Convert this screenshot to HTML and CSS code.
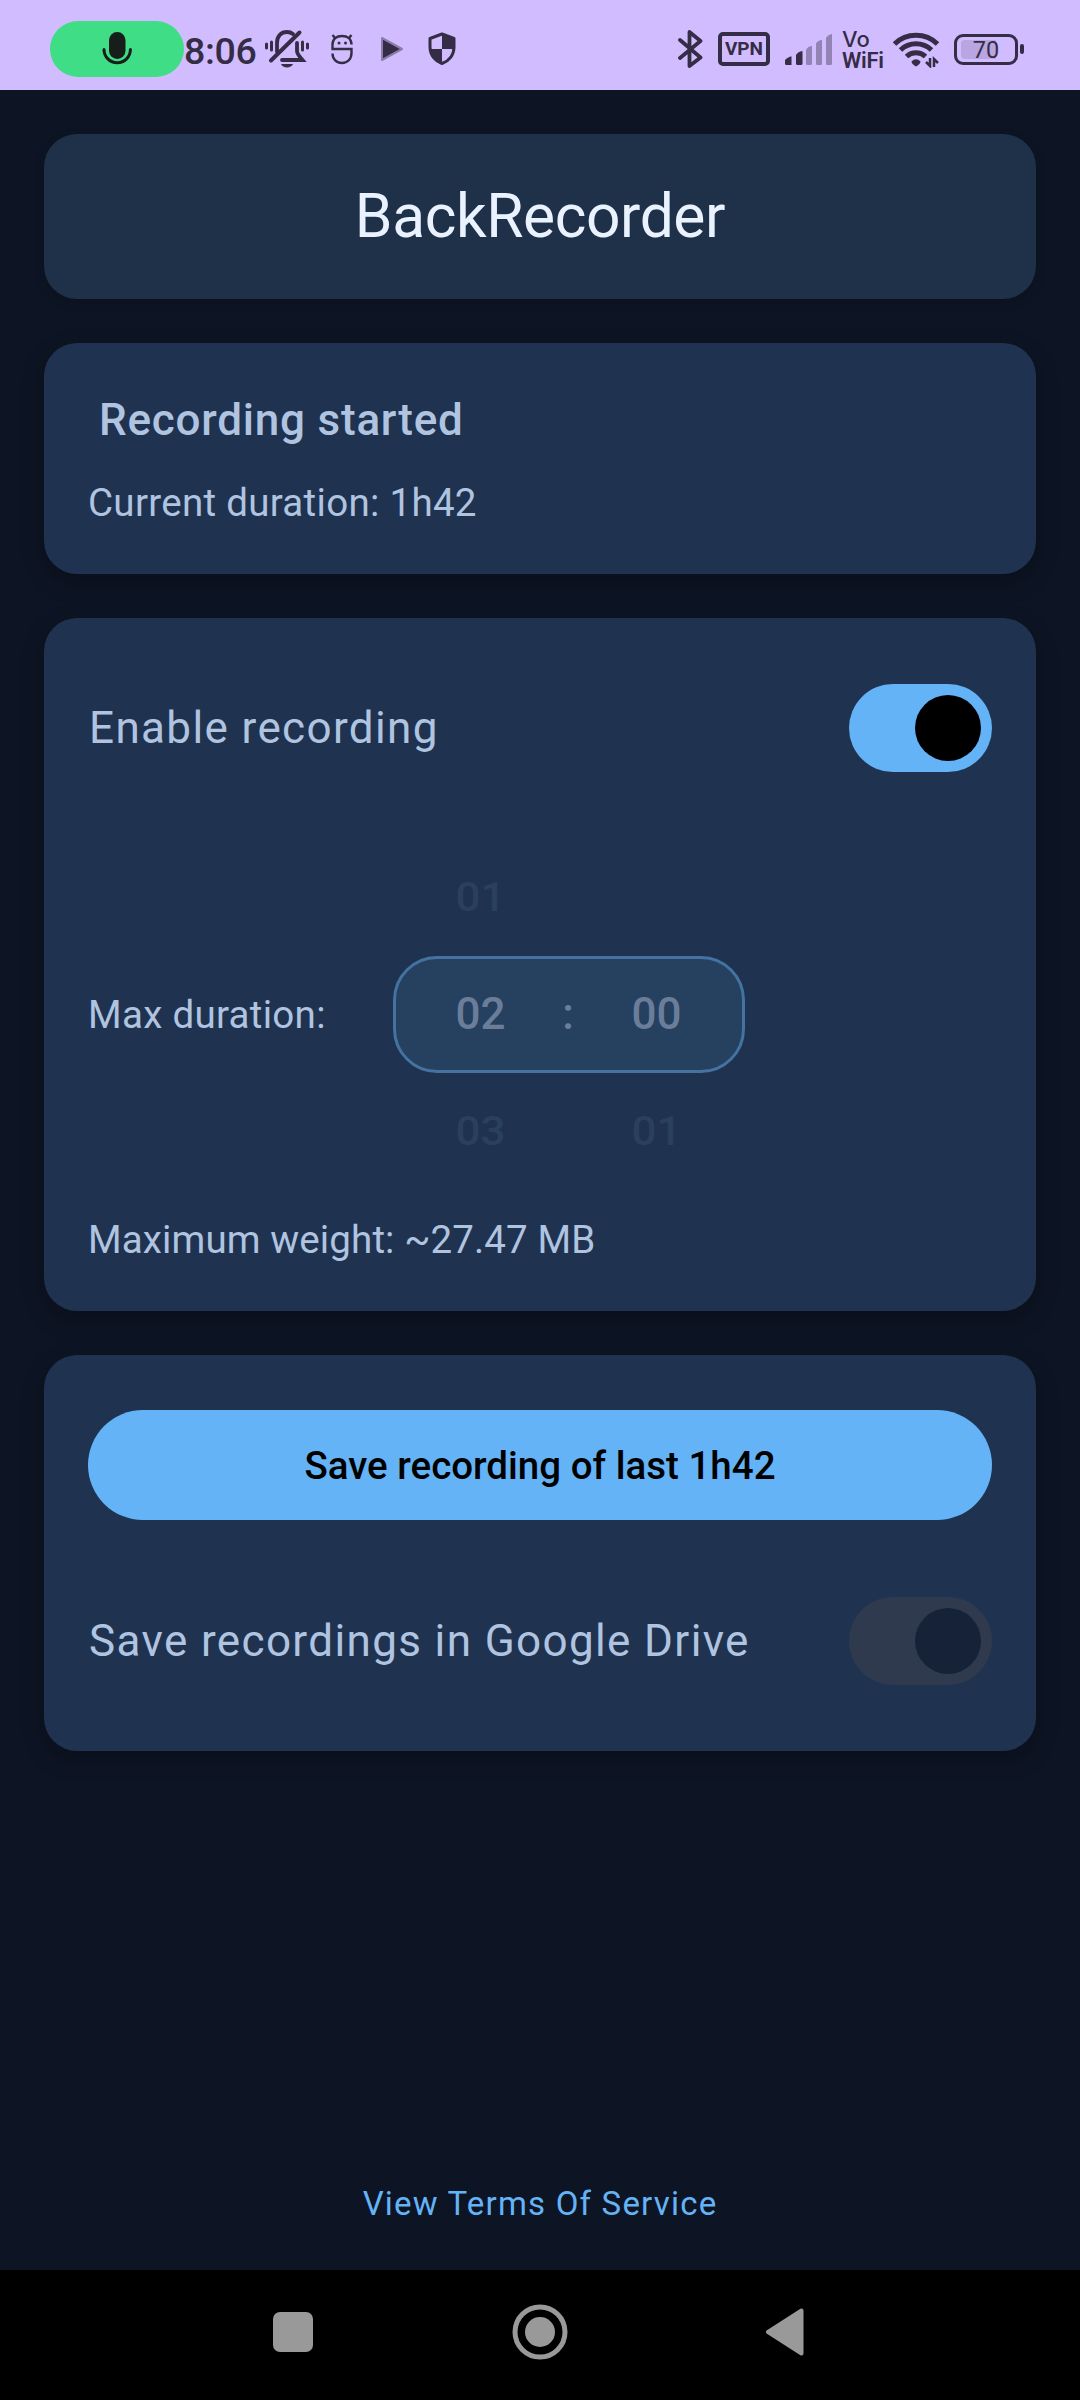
FILE: index.html
```html
<!DOCTYPE html>
<html lang="en">
<head>
<meta charset="utf-8">
<title>BackRecorder</title>
<link rel="stylesheet" href="styles.css">
</head>
<body>
<header class="status">
  <div class="mic-pill">
    <svg width="30" height="36" viewBox="0 0 30 36"><rect x="7" y="1" width="16.500" height="27" rx="8.250" fill="#171d1a"/><path d="M2 18.500a13.200 13.200 0 0 0 26.400 0" fill="none" stroke="#171d1a" stroke-width="3" stroke-linecap="round"/></svg>
  </div>
  <span class="clock">8:06</span>
  <svg class="bell" width="44" height="40" viewBox="0 0 44 40" fill="none" stroke="#352d45" stroke-linecap="round">
    <path d="M1.500 15v4M6.500 13v8M37.500 13v8M42.500 15v4" stroke-width="3"/>
    <path d="M12 22.500V14C12 7 16 3 22 3c2.500 0 4.500.8 6 2M32 14v8c0 3 2 5 5.500 9H17" stroke-width="3.800"/>
    <path d="M6 31.500 34.500 3.500" stroke-width="4"/>
    <path d="M16 35h12c-1.500 4.500-10.500 4.500-12 0z" fill="#352d45" stroke="none"/>
  </svg>
  <svg class="droid" width="24" height="32" viewBox="0 0 24 32" fill="none" stroke="#352d45" stroke-width="2.400">
    <path d="M21.500 11.500C21.500 6 17.500 3 12 3S2.500 6 2.500 11.500V16H21.500V20c0 6-4 10-9.500 10S2.500 26 2.500 20.500"/>
    <path d="M2.500 2l3 3.500M21.500 2l-3 3.500"/>
    <circle cx="9" cy="10" r="1.500" fill="#352d45" stroke="none"/><circle cx="15.500" cy="10" r="1.500" fill="#352d45" stroke="none"/>
  </svg>
  <svg class="play" width="24" height="26" viewBox="0 0 24 26"><path d="M2 2v22L22 13z" fill="#352d45" stroke="#8b7ca9" stroke-width="2" stroke-linejoin="round"/></svg>
  <svg class="shield" width="30" height="34" viewBox="0 0 30 34"><path d="M15 2 27 6.500V15c0 8-5 14-12 16.500C8 29 3 23 3 15V6.500z" fill="none" stroke="#352d45" stroke-width="3" stroke-linejoin="round"/><path d="M15 2l12 4.500V17H15zM15 17v14.500C8 29 3.500 24 3 17z" fill="#352d45"/></svg>
  <div class="status-right">
    <svg class="bt" width="26" height="38" viewBox="0 0 26 38" fill="none" stroke="#352d45" stroke-width="3.800" stroke-linecap="round" stroke-linejoin="round"><path d="M2 10 22.500 27.500 11.500 36V2L22.500 11 2 28"/></svg>
    <span class="vpn">VPN</span>
    <svg class="signal" width="49" height="32" viewBox="0 0 49 32"><path d="M1 26.500c0-1.500 5-4.500 6.500-4V31H2.500q-1.500 0-1.500-1.500zM12 21q2-3.500 6.500-4v12.500q0 1.500-1.500 1.500h-3.500q-1.500 0-1.500-1.500z" fill="#352d45"/><path d="M22 16q2-4 6-4v17.500q0 1.500-1.500 1.500h-3q-1.500 0-1.500-1.500zM32 9.500q2-3.500 6-3.500v23.500q0 1.500-1.500 1.500h-3q-1.500 0-1.500-1.500zM42 4q2-3.500 6-4v29.500q0 1.500-1.500 1.500h-3q-1.500 0-1.500-1.500z" fill="#9383b5"/></svg>
    <span class="vowifi"><span class="vo">Vo</span><span>WiFi</span></span>
    <svg class="wifi" width="47" height="36" viewBox="0 0 47 36"><g fill="none" stroke="#352d45" stroke-width="5"><path d="M1.500 12a31 31 0 0 1 43 0M7.500 18a22.500 22.500 0 0 1 31 0M13.500 24.500a14 14 0 0 1 19 0"/></g><path d="M18.500 29.500q4.500-4.500 9 0 0 2.500-4.500 5-4.500-2.500-4.500-5z" fill="#352d45"/><path d="M37 26v8l-4-4M41 35v-8l4 4" fill="none" stroke="#352d45" stroke-width="2.500"/></svg>
    <span class="battery"><span class="level">70</span></span><i class="cap"></i>
  </div>
</header>
<main class="app">
  <h1 class="title">BackRecorder</h1>
  <section class="card state">
    <h2 class="state-title">Recording started</h2>
    <p class="body">Current duration: 1h42</p>
  </section>
  <section class="card options">
    <div class="row"><span class="label">Enable recording</span><span class="switch"></span></div>
    <div class="duration">
      <span class="body">Max duration:</span>
      <div class="picker">
        <span class="faded up">01</span><span></span><span></span>
        <div class="selected"><span>02</span><span>:</span><span>00</span></div>
        <span class="faded">03</span><span></span><span class="faded">01</span>
      </div>
    </div>
    <p class="body weight">Maximum weight: ~27.47 MB</p>
  </section>
  <section class="card saving">
    <button class="save">Save recording of last 1h42</button>
    <div class="row"><span class="label">Save recordings in Google Drive</span><span class="switch disabled"></span></div>
  </section>
  <a class="terms">View Terms Of Service</a>
</main>
<nav class="nav">
  <svg width="40" height="40" viewBox="0 0 40 40"><rect width="40" height="40" rx="7" fill="#999"/></svg>
  <svg width="56" height="56" viewBox="0 0 56 56"><circle cx="28" cy="28" r="25" fill="none" stroke="#999" stroke-width="5"/><circle cx="28" cy="28" r="15" fill="#999"/></svg>
  <svg width="38" height="48" viewBox="0 0 38 48"><path d="M2 24 35.500 2.500v43z" fill="#999" stroke="#999" stroke-width="4" stroke-linejoin="round"/></svg>
</nav>
</body>
</html>
```
FILE: styles.css
```css
* { box-sizing: border-box; margin: 0; padding: 0; }
body { width: 1080px; height: 2400px; display: flex; flex-direction: column; background: #0d1423; font-family: Roboto, sans-serif; overflow: hidden; }
svg { display: block; flex: none; }
.status { height: 90px; flex: none; background: #d1bcff; display: flex; align-items: flex-start; padding-left: 50px; color: #352d45; }
.mic-pill { width: 134px; height: 56px; margin-top: 21px; border-radius: 28px; background: #3fdd86; display: flex; justify-content: center; padding-top: 10px; }
.clock { width: 73px; margin-top: 27px; font-size: 37.5px; line-height: 49px; white-space: nowrap; font-weight: 500; letter-spacing: -.3px; }
.bell { margin: 29px 0 0 8px; }
.droid { margin: 33px 0 0 21px; }
.play { margin: 36px 0 0 26px; }
.shield { margin: 32px 0 0 23px; }
.status-right { margin-left: auto; display: flex; padding-right: 56px; }
.bt { margin-top: 30px; }
.vpn { width: 52px; height: 34px; margin: 32px 0 0 14px; border: 4px solid; border-radius: 5px; font-size: 19px; font-weight: 700; line-height: 26px; text-align: center; }
.signal { margin: 34px 0 0 14px; }
.vowifi { display: flex; flex-direction: column; width: 43px; margin: 29px 0 0 9px; font-size: 22px; line-height: 21px; font-weight: 600; white-space: nowrap; letter-spacing: -.3px; }
.vo { font-family: Inter, sans-serif; font-weight: 500; letter-spacing: 0; }
.wifi { margin: 32px 0 0 8px; }
.battery { width: 64px; height: 31px; margin: 34px 0 0 14px; border: 3px solid; border-radius: 9px; padding: 3px 4px; }
.level { display: block; height: 19px; border-radius: 4px; font-size: 23.5px; line-height: 20px; text-align: center; background: linear-gradient(90deg, #b9a5e2 70%, transparent 70%); }
.cap { width: 4px; height: 10px; margin: 44px 0 0 2px; border-radius: 2px; background: #352d45; }
.app { height: 2180px; flex: none; display: flex; flex-direction: column; gap: 44px; padding: 44px 44px 0; }
.title { height: 165px; flex: none; border-radius: 33px; background: #1e3149; color: #eaf2ff; font-size: 60.5px; font-weight: 400; line-height: 165px; letter-spacing: -.4px; text-align: center; box-shadow: 0 4px 12px rgba(0,0,0,.12); }
.card { flex: none; border-radius: 33px; background: #1f3350; color: #b0c4e0; box-shadow: 0 8px 22px rgba(0,0,0,.25); }
.state { height: 231px; padding: 44px 44px 0; }
.state-title { padding: 0 11px; font-size: 44px; line-height: 66px; font-weight: 500; letter-spacing: .78px; }
.body { font-size: 38.5px; line-height: 55px; font-weight: 400; letter-spacing: .3px; white-space: nowrap; }
.state .body { margin-top: 22px; }
.options { height: 693px; padding: 66px 44px 0; }
.row { display: flex; align-items: center; justify-content: space-between; height: 88px; }
.label { padding-left: 1px; font-size: 44px; letter-spacing: 1.375px; white-space: nowrap; }
.switch { width: 143px; height: 88px; padding: 11px; border-radius: 44px; background: #64b3f6; display: flex; justify-content: flex-end; }
.switch::after { content: ""; width: 66px; height: 66px; border-radius: 50%; background: #000; }
.disabled { background: #303a4e; }
.disabled::after { background: #152238; }
.duration { height: 350px; margin-top: 67px; display: flex; align-items: center; }
.duration > .body { width: 305px; }
.picker { width: 352px; display: grid; grid-template-columns: 175px 0 177px; grid-template-rows: 117px 117px 117px; align-items: center; text-align: center; color: #6a7e9a; font-size: 44px; font-weight: 500; }
.selected { grid-column: 1 / 4; height: 117px; border: 3px solid #4473a1; border-radius: 44px; background: #264060; display: grid; grid-template-columns: 169px 6px 171px; align-items: center; justify-items: center; }
.faded { color: #2b405d; transform: scaleY(.93); }
.options > .weight { margin-top: 23px; letter-spacing: .12px; }
.saving { height: 396px; padding: 55px 44px 0; }
.save { display: block; width: 904px; height: 110px; border: 0; border-radius: 55px; background: #64b3f6; color: #000; font: 500 38.5px/112px Roboto, sans-serif; letter-spacing: 0; }
.saving .row { margin-top: 77px; }
.terms { margin: 387px auto 0; font-size: 33px; line-height: 44px; letter-spacing: 1.2px; color: #64b3f6; }
.nav { height: 130px; flex: none; background: #000; display: flex; align-items: center; justify-content: space-between; padding: 0 276px 6px 273px; }
```
